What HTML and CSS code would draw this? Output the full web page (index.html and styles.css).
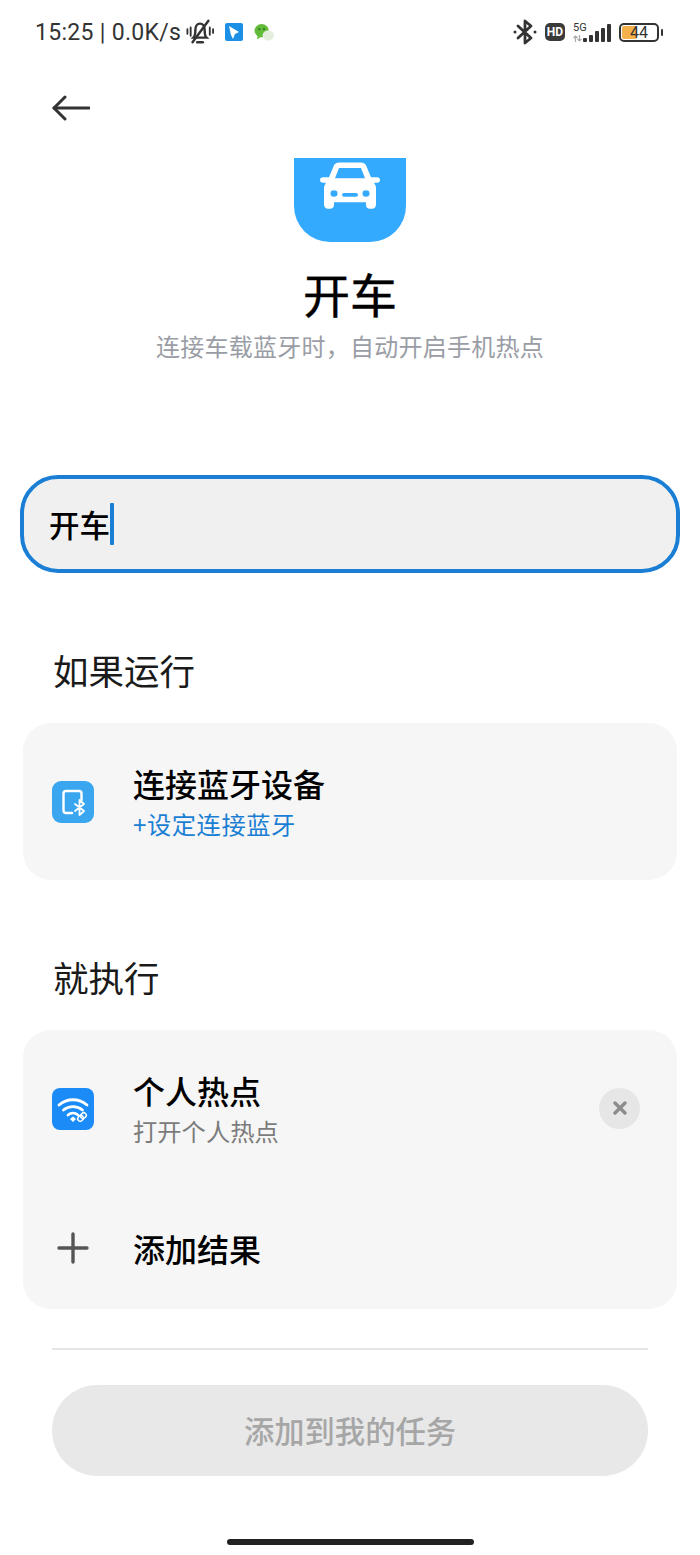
FILE: index.html
```html
<!DOCTYPE html>
<html lang="zh">
<head>
    <meta charset="UTF-8">
    <meta name="viewport" content="width=device-width, initial-scale=1.0">
    <title>开车</title>
    <link rel="stylesheet" href="styles.css">
</head>
<body>
    <div class="page">
        <!-- 状态栏 -->
        <div class="status-bar">
            <div class="status-left">
                <span class="status-text">15:25 | 0.0K/s</span>
                <svg class="mute-icon" width="28" height="28" viewBox="0 0 30 28" fill="none" stroke="#333" stroke-width="2.600" stroke-linecap="round">
                    <path d="M8 20c2-2 2-4 2-8 0-4 2-7 5-7s5 3 5 7c0 4 0 6 2 8z"/>
                    <path d="M12 25h6"/>
                    <path d="M7 25L24 2"/>
                    <path d="M1.500 11v5M5 9v9M25.500 9v8M29 11v4" stroke-width="2"/>
                </svg>
                <svg class="app-icon" width="18" height="18" viewBox="0 0 18 18">
                    <rect width="18" height="18" rx="2" fill="#1c8fe6"/>
                    <path d="M4 3l10 6-4 2-2 5-2-4z" fill="#fff"/>
                </svg>
                <svg class="wechat-icon" width="21" height="19" viewBox="0 0 22 20">
                    <ellipse cx="8" cy="8" rx="7.500" ry="7" fill="#63bb3a"/>
                    <path d="M4 13l-1 4 4-2z" fill="#63bb3a"/>
                    <ellipse cx="15" cy="13" rx="6" ry="5.500" fill="#e4eedd"/>
                    <circle cx="5.500" cy="6.500" r="1.200" fill="#2e7d1e"/>
                    <circle cx="10.500" cy="6.500" r="1.200" fill="#2e7d1e"/>
                </svg>
            </div>
            <div class="status-right">
                <svg width="24" height="26" viewBox="0 0 24 26" fill="none" stroke="#333" stroke-width="2.800" stroke-linejoin="round" stroke-linecap="round">
                    <path d="M5 7l13 12-6 5V2l6 5L5 19"/>
                    <circle cx="2" cy="13" r="1.500" fill="#333" stroke="none"/>
                    <circle cx="22" cy="13" r="1.500" fill="#333" stroke="none"/>
                </svg>
                <span class="hd-badge">HD</span>
                <div class="signal">
                    <div class="signal-left">
                        <span class="signal-label">5G</span>
                        <svg class="signal-arrows" width="9" height="7" viewBox="0 0 9 7" fill="none" stroke="#aaa" stroke-width="1.200">
                            <path d="M2.500 7V1M0.500 3l2-2 2 2M6.500 0v6M4.500 4l2 2 2-2"/>
                        </svg>
                    </div>
                    <div class="signal-bars">
                        <i class="bar bar-1"></i>
                        <i class="bar bar-2"></i>
                        <i class="bar bar-3"></i>
                        <i class="bar bar-4"></i>
                        <i class="bar bar-5"></i>
                    </div>
                </div>
                <div class="battery">
                    <div class="battery-body">
                        <span class="battery-fill"></span>
                        <span class="battery-num">44</span>
                    </div>
                    <span class="battery-cap"></span>
                </div>
            </div>
        </div>

        <!-- 返回 -->
        <div class="nav-bar">
            <svg width="38" height="26" viewBox="0 0 38 26" fill="none" stroke="#333" stroke-width="3" stroke-linecap="round" stroke-linejoin="round">
                <path d="M37 13H2"/>
                <path d="M13 2L2 13l11 11"/>
            </svg>
        </div>

        <!-- 顶部图标和标题 -->
        <div class="hero">
            <div class="hero-icon">
                <svg width="62" height="50" viewBox="0 0 62 54" preserveAspectRatio="none" fill="#fff">
                    <path fill-rule="evenodd" d="M15 4c1-2 3-3 5-3h22c2 0 4 1 5 3l5 13h6c2 0 3 1.500 3 3s-1 3-3 3h-3c1 2 2 3 2 6v17c0 3-1.500 5-4 5h-2c-2.500 0-4-1.500-4-4v-3H15v3c0 2.500-1.500 4-4 4H9c-2.500 0-4-2-4-5V29c0-3 1-4 2-6H4c-2 0-3-1.500-3-3s1-3 3-3h6zM20 7l-4 11h30L42 7zM15 31a3.500 3.500 0 1 0 0 7 3.500 3.500 0 0 0 0-7zm32 0a3.500 3.500 0 1 0 0 7 3.500 3.500 0 0 0 0-7zM25 34a1.500 1.500 0 0 0 0 4h12a1.500 1.500 0 0 0 0-4z" transform="translate(0 -0.500)"/>
                </svg>
            </div>
            <h1 class="hero-title">开车</h1>
            <p class="hero-desc">连接车载蓝牙时，自动开启手机热点</p>
        </div>

        <!-- 名称输入框 -->
        <div class="name-input">
            <span class="name-text">开车</span><span class="caret"></span>
        </div>

        <h2 class="section-title section-if">如果运行</h2>
        <div class="card card-if">
            <div class="row">
                <svg class="row-icon" width="42" height="42" viewBox="0 0 42 42" fill="none">
                    <rect width="42" height="42" rx="9" fill="#39a6ef"/>
                    <path d="M20 32h-6c-1.500 0-2.500-1-2.500-2.500v-17c0-1.500 1-2.500 2.500-2.500h13c1.500 0 2.500 1 2.500 2.500V19" stroke="#fff" stroke-width="2.400" stroke-linecap="round"/>
                    <path d="M23 23l9 7-4.500 4V19l4.500 4-9 7" stroke="#fff" stroke-width="1.800" stroke-linejoin="round" stroke-linecap="round"/>
                </svg>
                <div class="row-text">
                    <div class="row-title">连接蓝牙设备</div>
                    <div class="row-sub row-sub-link">+设定连接蓝牙</div>
                </div>
            </div>
        </div>

        <h2 class="section-title section-then">就执行</h2>
        <div class="card card-then">
            <div class="row">
                <svg class="row-icon" width="42" height="42" viewBox="0 0 42 42" fill="none">
                    <rect width="42" height="42" rx="8" fill="#1b8cf7"/>
                    <g stroke="#fff" stroke-width="2.800" stroke-linecap="round">
                        <path d="M7 17c8-7 20-7 28 0"/>
                        <path d="M11.500 22c5.500-4.500 13.500-4.500 19 0"/>
                        <path d="M16 27c3-2.500 7-2.500 10 0"/>
                    </g>
                    <path d="M18 31l3-2.500 3 2.500-3 3z" fill="#fff"/>
                    <g transform="rotate(-45 30 29)" stroke="#fff" stroke-width="1.500" fill="none">
                        <rect x="25" y="26.500" width="6" height="5" rx="2.500"/>
                        <rect x="29" y="26.500" width="6" height="5" rx="2.500"/>
                    </g>
                </svg>
                <div class="row-text">
                    <div class="row-title">个人热点</div>
                    <div class="row-sub">打开个人热点</div>
                </div>
                <div class="remove-btn">
                    <svg width="14" height="14" viewBox="0 0 14 14" stroke="#8c8c8c" stroke-width="3.400" stroke-linecap="round">
                        <path d="M2 2l10 10M12 2L2 12"/>
                    </svg>
                </div>
            </div>
            <div class="row row-add">
                <svg class="row-icon row-icon-add" width="42" height="42" viewBox="0 0 42 42" stroke="#555" stroke-width="3.400" stroke-linecap="round">
                    <path d="M21 7v28M7 21h28"/>
                </svg>
                <div class="row-title">添加结果</div>
            </div>
        </div>

        <div class="divider"></div>
        <div class="submit-btn">添加到我的任务</div>
        <div class="home-bar"></div>
    </div>
</body>
</html>
```

FILE: styles.css
```css
* {
    box-sizing: border-box;
}
body {
    margin: 0;
    background-color: #ffffff;
    font-family: "Noto Sans CJK SC", "Noto Sans", sans-serif;
}
.page {
    width: 700px;
    height: 1555px;
    display: flex;
    flex-direction: column;
    overflow: hidden;
}

/* 状态栏 */
.status-bar {
    height: 64px;
    padding: 0 37px 0 35px;
    display: flex;
    justify-content: space-between;
    align-items: center;
}
.status-left,
.status-right {
    display: flex;
    align-items: center;
}
.status-text {
    font-family: Roboto, sans-serif;
    font-size: 23px;
    letter-spacing: 0.3px;
    color: #333333;
    white-space: nowrap;
}
.mute-icon {
    margin-left: 5px;
}
.app-icon {
    margin-left: 11px;
}
.wechat-icon {
    margin-left: 11px;
}
.status-right svg {
    display: block;
}
.hd-badge {
    margin-left: 8px;
    width: 20px;
    height: 18px;
    border-radius: 5px;
    background: #3a3a3a;
    color: #ffffff;
    font-family: Roboto, sans-serif;
    font-size: 12px;
    font-weight: 700;
    line-height: 18px;
    text-align: center;
}
.signal {
    margin-left: 8px;
    width: 38px;
    height: 20px;
    display: flex;
    align-items: flex-end;
}
.signal-left {
    flex: none;
    width: 18px;
    display: flex;
    flex-direction: column;
}
.signal-label {
    font-family: Roboto, sans-serif;
    font-size: 11px;
    line-height: 12px;
    color: #333333;
}
.signal-arrows {
    margin-top: 1px;
}
.signal-bars {
    margin-left: -8px;
    height: 18px;
    display: flex;
    align-items: flex-end;
    gap: 2px;
}
.bar {
    width: 4px;
    background: #333333;
    border-radius: 1px;
}
.bar-1 { height: 4px; }
.bar-2 { height: 7px; }
.bar-3 { height: 11px; }
.bar-4 { height: 14px; }
.bar-5 { height: 18px; }
.battery {
    margin-left: 8px;
    display: flex;
    align-items: center;
}
.battery-body {
    position: relative;
    width: 40px;
    height: 19px;
    border: 2px solid #333333;
    border-radius: 5px;
    overflow: hidden;
}
.battery-fill {
    position: absolute;
    left: 1px;
    top: 1px;
    bottom: 1px;
    width: 15px;
    background: #f4b04a;
    border-radius: 2px;
}
.battery-num {
    position: relative;
    display: block;
    font-family: Roboto, sans-serif;
    font-size: 16px;
    line-height: 15px;
    text-align: center;
    color: #333333;
}
.battery-cap {
    margin-left: 2px;
    width: 2px;
    height: 7px;
    background: #333333;
    border-radius: 1px;
}

.nav-bar {
    height: 94px;
    padding: 31px 0 0 52px;
}
.nav-bar svg {
    display: block;
}

.hero {
    display: flex;
    flex-direction: column;
    align-items: center;
}
.hero-icon {
    width: 112px;
    height: 84px;
    padding-top: 4px;
    background: #34aaff;
    border-radius: 0 0 36px 36px;
    display: flex;
    justify-content: center;
    align-items: flex-start;
}
.hero-title {
    margin: 22px 0 0;
    font-size: 47px;
    font-weight: 400;
    line-height: 58px;
    color: #000000;
    -webkit-text-stroke: 0.4px #000000;
}
.hero-desc {
    margin: 6px 0 0;
    font-size: 24px;
    letter-spacing: 0.25px;
    line-height: 36px;
    color: #9a9da6;
}

.name-input {
    margin: 111px 20px 0;
    height: 98px;
    padding-left: 25px;
    border: 4px solid #1a7fd4;
    border-radius: 38px;
    background: #f0f0f0;
    display: flex;
    align-items: center;
}
.name-text {
    font-size: 30.500px;
    font-weight: 500;
    color: #000000;
}
.caret {
    width: 4px;
    height: 42px;
    background: #1a7fd4;
    border-radius: 1px;
}

.section-title {
    margin: 0 53px;
    font-size: 35.500px;
    font-weight: 400;
    line-height: 48px;
    color: #1a1a1a;
}
.section-if {
    margin-top: 73px;
}
.section-then {
    margin-top: 73px;
}

.card {
    margin: 29px 23px 0;
    background: #f6f6f6;
    border-radius: 28px;
}
.card-if {
    height: 157px;
    padding-top: 38px;
}
.card-then {
    height: 279px;
    padding-top: 38px;
}
.row {
    padding: 0 37px 0 29px;
    display: flex;
    align-items: center;
    height: 80px;
}
.row-icon {
    flex: none;
    margin-top: 2px;
    margin-right: 39px;
}
.row-icon-add {
    margin-top: 0;
}
.row-text {
    flex: 1;
}
.row-title {
    font-size: 32px;
    font-weight: 500;
    line-height: 44px;
    color: #000000;
}
.row-sub {
    margin-top: 2px;
    font-size: 24.300px;
    line-height: 34px;
    color: #7c7c7c;
}
.row-sub-link {
    color: #1a7fd4;
    letter-spacing: 0.5px;
}
.row-add {
    margin-top: 60px;
}
.remove-btn {
    width: 41px;
    height: 41px;
    border-radius: 50%;
    background: #e6e6e6;
    display: flex;
    justify-content: center;
    align-items: center;
}

.divider {
    margin: 39px 52px 0;
    height: 2px;
    background: #e6e6e6;
}
.submit-btn {
    margin: 35px 52px 0;
    height: 91px;
    padding-bottom: 2px;
    border-radius: 46px;
    background: #e8e8e8;
    color: #a6a6a6;
    font-size: 30.300px;
    font-weight: 500;
    display: flex;
    justify-content: center;
    align-items: center;
}
.home-bar {
    margin: 63px auto 0;
    width: 247px;
    height: 6px;
    border-radius: 3px;
    background: #222222;
}
```
